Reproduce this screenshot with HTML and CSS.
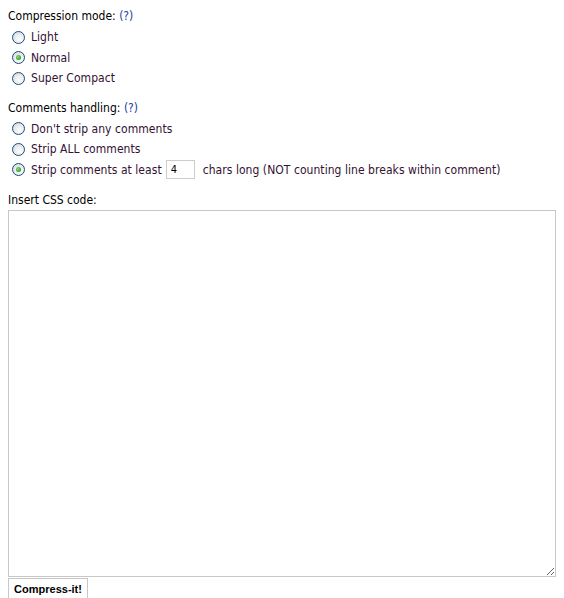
FILE: index.html
```html
<!DOCTYPE html>
<html lang="en">
<head>
  <meta charset="UTF-8" />
  <title>CSS Compressor</title>
  <link rel="stylesheet" href="styles.css">
</head>
<body>
  <form class="compress-form">
    <fieldset class="group">
      <div class="group-title">Compression mode: <a href="#" class="help">(?)</a></div>
      <label class="option"><input type="radio" name="mode" value="light"> Light</label>
      <label class="option"><input type="radio" name="mode" value="normal" checked> Normal</label>
      <label class="option"><input type="radio" name="mode" value="compact"> Super Compact</label>
    </fieldset>

    <fieldset class="group">
      <div class="group-title">Comments handling: <a href="#" class="help">(?)</a></div>
      <label class="option"><input type="radio" name="comments" value="none"> Don't strip any comments</label>
      <label class="option"><input type="radio" name="comments" value="all"> Strip ALL comments</label>
      <label class="option"><input type="radio" name="comments" value="min" checked> Strip comments at least <input type="text" class="min-chars" value="4"> chars long (NOT counting line breaks within comment)</label>
    </fieldset>

    <div class="code-title">Insert CSS code:</div>
    <textarea class="code" name="css"></textarea>
    <button type="submit" class="submit-button">Compress-it!</button>
  </form>
</body>
</html>
```
FILE: styles.css
```css
body {
  margin: 8px;
  font-family: "DejaVu Sans Condensed", "DejaVu Sans", sans-serif;
  font-size: 12px;
  color: #000;
  background-color: #fff;
}

.compress-form {
  display: flex;
  flex-direction: column;
}

.group {
  border: none;
  margin: 0 0 11px 0;
  padding: 0;
}

.group-title {
  line-height: 16px;
  margin-bottom: 3px;
}

.help {
  color: #1a3d9c;
  text-decoration: none;
}

.option {
  display: flex;
  align-items: center;
  height: 20.5px;
  padding-left: 4px;
  color: #331133;
  letter-spacing: 0.05px;
}

/* Radio buttons drawn by hand */
.option input[type="radio"] {
  appearance: none;
  -webkit-appearance: none;
  width: 13px;
  height: 13px;
  margin: 0 6px 0 0;
  border: 1px solid #1d4d7a;
  border-radius: 50%;
  background: radial-gradient(circle at 60% 65%, #ffffff 0%, #e6e8ea 55%, #c9ced4 100%);
  position: relative;
  flex: none;
}

.option input[type="radio"]:checked::after {
  content: "";
  position: absolute;
  left: 3px;
  top: 3px;
  width: 5px;
  height: 5px;
  border-radius: 50%;
  background: radial-gradient(circle at 40% 40%, #8ee07a 0%, #2ea11c 70%, #1f8012 100%);
}

.min-chars {
  width: 29px;
  height: 19px;
  box-sizing: border-box;
  margin: 0 8px 0 4px;
  padding: 0 4px;
  border: 1px solid #cccccc;
  font-family: inherit;
  font-size: 11px;
  color: #000;
}

.code-title {
  line-height: 16px;
  margin-top: 1px;
  margin-bottom: 2px;
}

.code {
  width: 548px;
  height: 367px;
  box-sizing: border-box;
  margin: 0;
  border: 1px solid #c8c8c8;
  resize: both;
}

.submit-button {
  align-self: flex-start;
  width: 80px;
  height: 22px;
  margin-top: 1px;
  padding: 0;
  border: 1px solid #c8c8c8;
  background-color: #fff;
  font-family: "Liberation Sans", Arial, sans-serif;
  font-size: 11px;
  font-weight: bold;
  color: #000;
}
```
